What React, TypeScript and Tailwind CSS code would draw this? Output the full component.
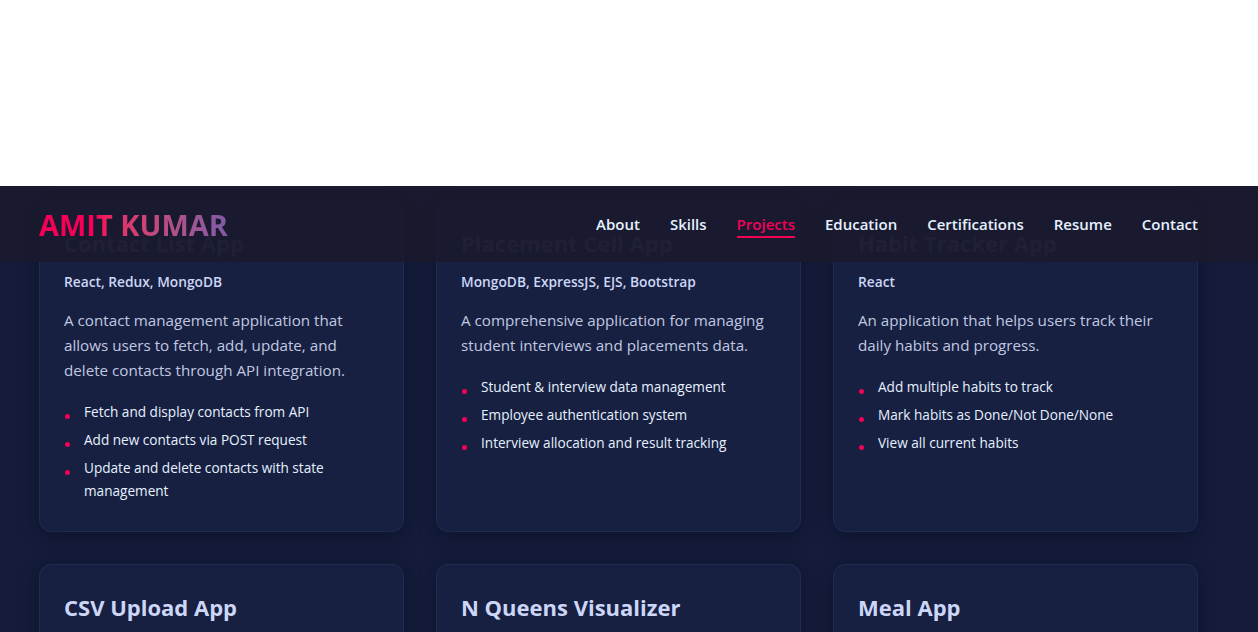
import React from 'react'

type Project = {
  title: string
  tech: string
  description: string
  features: string[]
}

const projects: Project[] = [
  {
    title: 'Contact List App',
    tech: 'React, Redux, MongoDB',
    description:
      'A contact management application that allows users to fetch, add, update, and delete contacts through API integration.',
    features: [
      'Fetch and display contacts from API',
      'Add new contacts via POST request',
      'Update and delete contacts with state management',
    ],
  },
  {
    title: 'Placement Cell App',
    tech: 'MongoDB, ExpressJS, EJS, Bootstrap',
    description:
      'A comprehensive application for managing student interviews and placements data.',
    features: [
      'Student & interview data management',
      'Employee authentication system',
      'Interview allocation and result tracking',
    ],
  },
  {
    title: 'Habit Tracker App',
    tech: 'React',
    description: 'An application that helps users track their daily habits and progress.',
    features: [
      'Add multiple habits to track',
      'Mark habits as Done/Not Done/None',
      'View all current habits',
    ],
  },
  {
    title: 'CSV Upload App',
    tech: 'NodeJS, ExpressJS, MongoDB',
    description: 'An application to upload CSV files and display their data in a table.',
    features: ['Upload and parse CSV files', 'Search and sort table data'],
  },
  {
    title: 'N Queens Visualizer',
    tech: 'HTML, CSS, JavaScript',
    description: 'A visualizer that shows how the N Queens problem is solved with backtracking.',
    features: ['Step by step visualization', 'Adjustable board size'],
  },
  {
    title: 'Meal App',
    tech: 'HTML, CSS, JavaScript',
    description: 'An application to search meals and keep a list of favourite meals.',
    features: ['Search meals from API', 'Add meals to favourites'],
  },
]

const links = ['About', 'Skills', 'Projects', 'Education', 'Certifications', 'Resume', 'Contact']

const ProjectCard = ({ project }: { project: Project }) => (
  <div className="rounded-xl border border-[#212b52] bg-[#172041] px-6 pt-7 pb-6 shadow-[0_4px_18px_rgba(8,12,30,0.45)]">
    <h3 className="mb-[15px] text-[22px] font-bold leading-[28px] text-[#ccd6f6]">{project.title}</h3>
    <p className="mb-4 text-[13.75px] font-semibold leading-5 text-[#ccd6f6]">{project.tech}</p>
    <p className="mb-[17px] text-[15.2px] leading-[25px] text-[#c0c8e0]">{project.description}</p>
    <ul>
      {project.features.map((f) => (
        <li key={f} className="mb-[5px] flex text-[13.6px] leading-[23px] text-[#e6f1ff]">
          <span className="ml-[1px] mt-[14px] h-[5px] w-[5px] shrink-0 rounded-full bg-[#f50057]" />
          <span className="ml-[14px]">{f}</span>
        </li>
      ))}
    </ul>
  </div>
)

export default function App() {
  return (
    <div className="min-h-screen bg-white font-['Open_Sans',sans-serif]">
      <div className="h-[186px] bg-white" />
      <section className="relative bg-[#141c3a] pb-16">
        <header className="absolute inset-x-0 top-0 z-10 flex h-[76px] items-center justify-between bg-[#1a1a2e]/[0.97] pl-[39px] pr-[60px]">
          <h1 className="bg-gradient-to-r from-[#f50057] from-30% to-[#7e5ba6] bg-clip-text text-[29px] font-bold leading-none text-transparent">
            AMIT KUMAR
          </h1>
          <nav className="flex items-center gap-[30px]">
            {links.map((l) =>
              l === 'Projects' ? (
                <span key={l} className="relative text-[15px] font-semibold leading-6 text-[#f50057]">
                  {l}
                  <span className="absolute inset-x-0 -bottom-[2px] h-[2px] bg-[#f50057]" />
                </span>
              ) : (
                <span key={l} className="text-[15px] font-semibold leading-6 text-[#e6f1ff]">
                  {l}
                </span>
              ),
            )}
          </nav>
        </header>
        <div className="grid grid-cols-3 gap-8 pl-[39px] pr-[60px] pt-[14px]">
          {projects.map((p) => (
            <ProjectCard key={p.title} project={p} />
          ))}
        </div>
      </section>
    </div>
  )
}
